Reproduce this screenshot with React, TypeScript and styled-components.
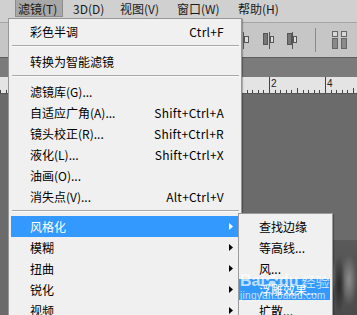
import styled, {createGlobalStyle} from "styled-components";

interface MenuEntry {
    label: string;
    shortcut?: string;
    submenu?: boolean;
    active?: boolean;
    separator?: boolean;
}

const barItems = [
    {label: '滤镜(T)', width: 48, active: true},
    {label: '3D(D)', width: 40},
    {label: '视图(V)', width: 50},
    {label: '窗口(W)', width: 54},
    {label: '帮助(H)', width: 48},
];

const filterMenu: MenuEntry[] = [
    {label: '彩色半调', shortcut: 'Ctrl+F'},
    {label: '', separator: true},
    {label: '转换为智能滤镜'},
    {label: '', separator: true},
    {label: '滤镜库(G)...'},
    {label: '自适应广角(A)...', shortcut: 'Shift+Ctrl+A'},
    {label: '镜头校正(R)...', shortcut: 'Shift+Ctrl+R'},
    {label: '液化(L)...', shortcut: 'Shift+Ctrl+X'},
    {label: '油画(O)...'},
    {label: '消失点(V)...', shortcut: 'Alt+Ctrl+V'},
    {label: '', separator: true},
    {label: '风格化', submenu: true, active: true},
    {label: '模糊', submenu: true},
    {label: '扭曲', submenu: true},
    {label: '锐化', submenu: true},
    {label: '视频', submenu: true},
];

const stylizeMenu: MenuEntry[] = [
    {label: '查找边缘'},
    {label: '等高线...'},
    {label: '风...'},
    {label: '浮雕效果...', active: true},
    {label: '扩散...'},
];

export default function App() {
    return <>
        <GlobalStyle/>
        <Screen>
            <MenuBar>
                {barItems.map(i => <BarItem key={i.label} $width={i.width} $active={i.active}>{i.label}</BarItem>)}
            </MenuBar>
            <OptionsBar>
                <Grip/>
                <IconRow>
                    <svg width="8" height="17" viewBox="0 0 8 17">
                        <line x1="0.5" y1="0" x2="0.5" y2="17" stroke="#555"/>
                        <rect x="1.5" y="4.5" width="4" height="6" stroke="#555" fill="#ddd"/>
                    </svg>
                    <AlignIcon lineX={6}/>
                    <AlignIcon lineX={5}/>
                    <Divider/>
                    <svg width="16" height="18" viewBox="0 0 16 18">
                        <rect x="0.5" y="0.5" width="5" height="5" stroke="#666" fill="#d8d8d8"/>
                        <rect x="0.5" y="7.5" width="5" height="10" stroke="#666" fill="#8a8a8a"/>
                        <rect x="9.5" y="0.5" width="5" height="5" stroke="#666" fill="#d8d8d8"/>
                        <rect x="9.5" y="7.5" width="5" height="10" stroke="#666" fill="#8a8a8a"/>
                    </svg>
                    <Divider/>
                </IconRow>
            </OptionsBar>
            <TabStrip/>
            <Ruler>
                <RulerTicks/>
            </Ruler>
            <Canvas>
                <Document/>
            </Canvas>

            <Dropdown>
                {filterMenu.map((e, idx) => e.separator ?
                    <Separator key={idx}/> :
                    <Row key={idx} $active={e.active}>
                        <span>{e.label}</span>
                        <Shortcut>{e.shortcut}</Shortcut>
                        <ArrowCell>{e.submenu && <Arrow white={e.active}/>}</ArrowCell>
                    </Row>)}
            </Dropdown>

            <Submenu>
                {stylizeMenu.map(e => <SubRow key={e.label} $active={e.active}>{e.label}</SubRow>)}
            </Submenu>

            <Watermark>
                <WmLogo>
                    Bai
                    <svg width="14" height="14" viewBox="0 0 16 14">
                        <circle cx="3" cy="5" r="1.8" fill="currentColor"/>
                        <circle cx="6.5" cy="2" r="1.8" fill="currentColor"/>
                        <circle cx="10" cy="2" r="1.8" fill="currentColor"/>
                        <circle cx="13.2" cy="5" r="1.8" fill="currentColor"/>
                        <ellipse cx="8.2" cy="10" rx="4" ry="3.4" fill="currentColor"/>
                    </svg>
                    du
                    <WmCn>经验</WmCn>
                </WmLogo>
                <WmUrl>jingyan.baidu.com</WmUrl>
            </Watermark>
        </Screen>
    </>
}

function AlignIcon({lineX}: {lineX: number}) {
    return <svg width="12" height="17" viewBox="0 0 12 17">
        <rect x="0.5" y="1.5" width="4" height="11" stroke="#555" fill="#777"/>
        <line x1={lineX + 0.5} y1="0" x2={lineX + 0.5} y2="17" stroke="#555"/>
        <rect x={lineX + 1.5} y="4.5" width="3" height="6" stroke="#555" fill="#ddd"/>
    </svg>
}

function Arrow({white}: {white?: boolean}) {
    return <svg width="4" height="7" viewBox="0 0 4 7">
        <polygon points="0,0 4,3.5 0,7" fill={white ? '#fff' : '#000'}/>
    </svg>
}

function RulerTicks() {
    const ticks = [];
    for (let i = -30; i < 70; i++) {
        const x = Math.round(157 + i * 5.6) + 0.5;
        if (x < 0 || x > 357) continue;
        const major = i % 10 === 0;
        const half = i % 5 === 0;
        const h = major ? 16 : half ? 5 : 3;
        ticks.push(<line key={i} x1={x} y1={16 - h} x2={x} y2={16} stroke="#444"/>);
    }
    return <svg width="357" height="16" viewBox="0 0 357 16">
        {ticks}
        <text x="271" y="10" fontSize="10" fill="#222" fontFamily="Liberation Sans, sans-serif">2</text>
        <text x="327" y="10" fontSize="10" fill="#222" fontFamily="Liberation Sans, sans-serif">4</text>
    </svg>
}

const GlobalStyle = createGlobalStyle`
    html, body {
        margin: 0;
        padding: 0;
    }

    body {
        width: 357px;
        height: 315px;
        overflow: hidden;
        background: #6b6b6b;
        font-family: "Noto Sans CJK SC", "Noto Sans", sans-serif;
        font-size: 12px;
    }
`

const Screen = styled.div`
    position: relative;
    width: 357px;
    height: 315px;
    display: flex;
    flex-direction: column;
    overflow: hidden;
`

const MenuBar = styled.div`
    height: 22px;
    flex: 0 0 22px;
    display: flex;
    align-items: flex-start;
    gap: 7px;
    padding-left: 15px;
    background: #d0d0d0;
    border-bottom: 1px solid #a6a6a6;
`

const BarItem = styled.div<{ $active?: boolean; $width: number }>`
    width: ${p => p.$width}px;
    height: 17px;
    line-height: 17px;
    padding: 0 0 0 2px;
    box-sizing: border-box;
    color: #1a1a1a;
    white-space: nowrap;
    background: ${p => p.$active ? '#a8a8a8' : 'transparent'};
    border: 1px solid ${p => p.$active ? '#8c8c8c' : 'transparent'};
    border-top: none;
`

const OptionsBar = styled.div`
    flex: 0 0 34px;
    height: 34px;
    display: flex;
    align-items: center;
    background: #c6c6c6;
    border-bottom: 1px solid #5e5e5e;
`

const Grip = styled.div`
    width: 1px;
    height: 14px;
    margin-left: 2px;
    background: #8e8e8e;
`

const IconRow = styled.div`
    display: flex;
    align-items: center;
    gap: 12px;
    margin-left: 241px;
`

const Divider = styled.div`
    width: 1px;
    height: 24px;
    background: #8a8a8a;
    margin: 0 4px;
`

const TabStrip = styled.div`
    flex: 0 0 19px;
    background: #7b7b7b;
`

const Ruler = styled.div`
    flex: 0 0 16px;
    background: #e4e4e4;
    border-bottom: 1px solid #555;
    svg {
        display: block;
    }
`

const Canvas = styled.div`
    flex: 1;
    display: flex;
    justify-content: flex-end;
    padding-top: 146px;
    background: #6b6b6b;
`

const Document = styled.div`
    width: 40px;
    height: 80px;
    background: radial-gradient(ellipse 7px 22px at 12px 36px, #a8a8a8, rgba(160, 160, 160, 0) 100%),
    radial-gradient(ellipse 6px 30px at 22px 45px, #2a2a2a, rgba(40, 40, 40, 0) 100%),
    radial-gradient(ellipse 8px 26px at 32px 40px, #8c8c8c, rgba(140, 140, 140, 0) 100%),
    linear-gradient(#5a5a5a, #4a4a4a);
`

const Dropdown = styled.div`
    position: absolute;
    left: 8px;
    top: 18px;
    width: 229px;
    padding: 2px 1px 2px 2px;
    background: #f0f0f0;
    border: 1px solid #979797;
    border-bottom: none;
    box-shadow: 1px 1px 1px rgba(0, 0, 0, 0.25);
`

const Row = styled.div<{ $active?: boolean }>`
    height: 21px;
    line-height: 21px;
    display: grid;
    grid-template-columns: 1fr auto 16px;
    padding-left: 19px;
    color: ${p => p.$active ? '#fff' : '#000'};
    background: ${p => p.$active ? '#3399ff' : 'transparent'};
    white-space: nowrap;
`

const Shortcut = styled.span`
    text-align: right;
    letter-spacing: 0.25px;
`

const ArrowCell = styled.span`
    display: flex;
    align-items: center;
    justify-content: center;
    padding-right: 3px;
`

const Separator = styled.div`
    height: 9px;
    box-sizing: border-box;
    padding-top: 3px;
    margin: 0 1px;

    &::after {
        content: "";
        display: block;
        height: 1px;
        background: #a9a9a9;
        border-bottom: 1px solid #fafafa;
    }
`

const Submenu = styled.div`
    position: absolute;
    left: 238px;
    top: 213px;
    width: 91px;
    height: 120px;
    padding: 2px 2px 0 0;
    background: #f0f0f0;
    border: 1px solid #9a9a9a;
    box-shadow: 1px 1px 1px rgba(0, 0, 0, 0.25);
`

const SubRow = styled.div<{ $active?: boolean }>`
    height: 21px;
    line-height: 21px;
    padding-left: 20px;
    white-space: nowrap;
    color: ${p => p.$active ? '#fff' : '#000'};
    background: ${p => p.$active ? '#3399ff' : 'transparent'};
`

const Watermark = styled.div`
    position: absolute;
    left: 240px;
    top: 272px;
    display: flex;
    flex-direction: column;
    color: rgba(255, 255, 255, 0.7);
    font-family: "Liberation Sans", sans-serif;
    pointer-events: none;
`

const WmLogo = styled.div`
    display: flex;
    align-items: center;
    font-size: 16px;
    font-weight: bold;
    line-height: 18px;
`

const WmCn = styled.span`
    margin-left: 3px;
    font-family: "Noto Sans CJK SC", sans-serif;
    font-weight: normal;
    font-size: 14px;
`

const WmUrl = styled.div`
    font-size: 10px;
    line-height: 11px;
    letter-spacing: 0.3px;
`
